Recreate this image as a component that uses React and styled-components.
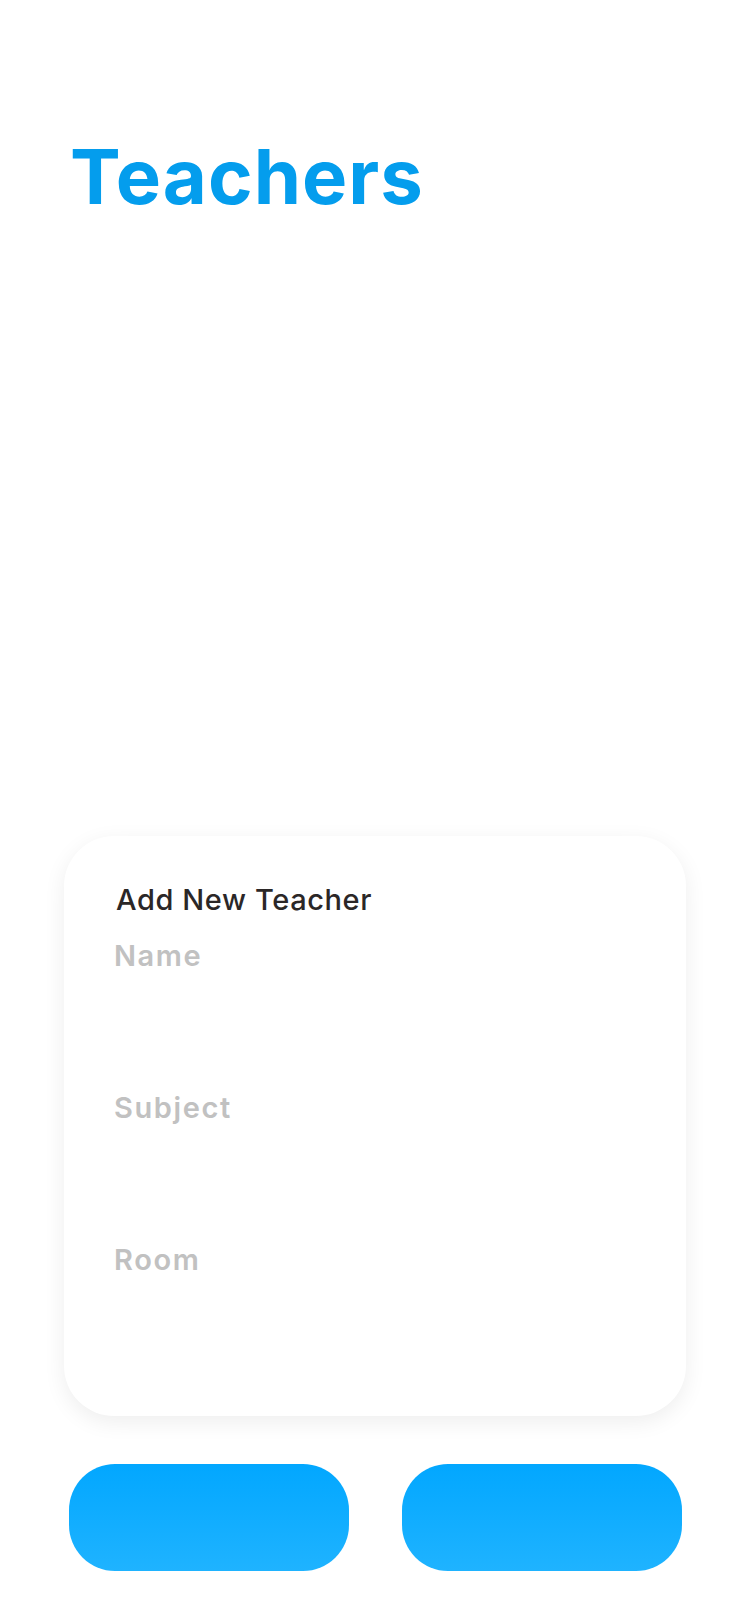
import styled, { createGlobalStyle } from "styled-components";

const GlobalStyle = createGlobalStyle`
  body {
    margin: 0;
    background: #ffffff;
    font-family: "Inter", "Noto Sans", sans-serif;
  }
`;

const fields = ["Name", "Subject", "Room"];

export default function App() {
  return (
    <>
      <GlobalStyle />
      <SPage>
        <STitle>Teachers</STitle>
        <SCard>
          <SCardTtl>Add New Teacher</SCardTtl>
          <SFields>
            {fields.map((f) => (
              <SField key={f}>
                <SInput placeholder={f} />
              </SField>
            ))}
          </SFields>
        </SCard>
        <SBtnRow>
          <SBtn />
          <SBtn />
        </SBtnRow>
      </SPage>
    </>
  );
}

const SPage = styled.div`
  width: 750px;
  min-height: 1624px;
  display: flex;
  flex-direction: column;
  align-items: center;
  box-sizing: border-box;
`;

const STitle = styled.h1`
  align-self: flex-start;
  margin: 138px 0 0 70px;
  color: #049ded;
  font-family: "Inter", sans-serif;
  font-weight: 700;
  font-size: 76px;
  line-height: 1;
  letter-spacing: 1px;
`;

const SCard = styled.div`
  margin-top: 622px;
  width: 622px;
  height: 580px;
  box-sizing: border-box;
  padding: 46px 50px 0;
  background: #ffffff;
  border-radius: 50px;
  box-shadow: 0 6px 22px rgba(0, 0, 0, 0.07);
`;

const SCardTtl = styled.h2`
  margin: 0 0 0 2px;
  color: #2b2727;
  font-family: "Inter", sans-serif;
  font-weight: 500;
  font-size: 29px;
  line-height: 36px;
  letter-spacing: 0.6px;
`;

const SFields = styled.div`
  display: flex;
  flex-direction: column;
`;

const SField = styled.div`
  height: 152px;
  &:first-child {
    margin-top: 20px;
  }
`;

const SInput = styled.input`
  width: 100%;
  border: none;
  outline: none;
  padding: 0;
  background: transparent;
  font-family: "Inter", sans-serif;
  font-weight: 600;
  font-size: 29px;
  line-height: 36px;
  height: 36px;
  letter-spacing: 1.6px;
  color: #2b2727;
  &::placeholder {
    color: #c1c1c1;
  }
`;

const SBtnRow = styled.div`
  margin-top: 48px;
  display: flex;
  gap: 53px;
`;

const SBtn = styled.button`
  width: 280px;
  height: 107px;
  border: none;
  border-radius: 46px;
  background: linear-gradient(180deg, #02a7ff 0%, #1fb3ff 100%);
  cursor: pointer;
`;
